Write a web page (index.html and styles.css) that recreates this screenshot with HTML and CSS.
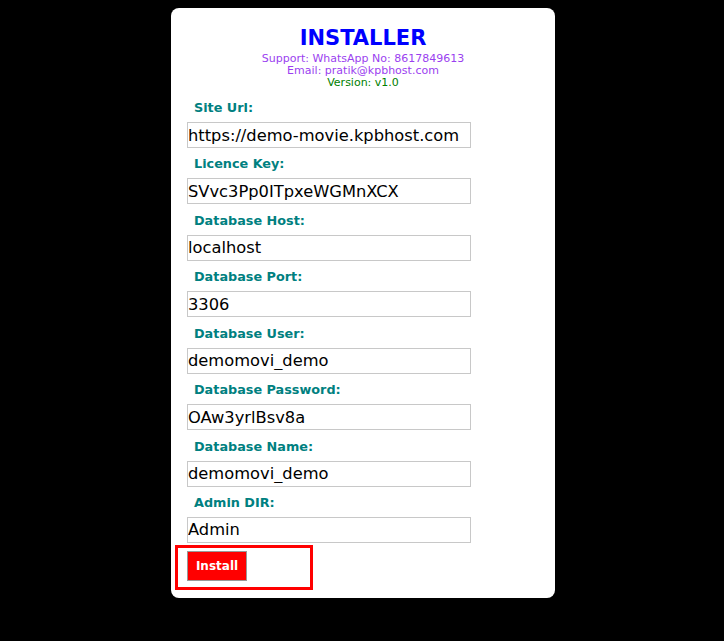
FILE: index.html
```html
<!DOCTYPE html>
<html>
<head>
<meta charset="utf-8">
<link rel="stylesheet" href="styles.css">
</head>
<body>
<div class="card">
  <div class="head">
    <h1 class="title">INSTALLER</h1>
    <div class="support">Support: WhatsApp No: 8617849613</div>
    <div class="support">Email: pratik@kpbhost.com</div>
    <div class="version">Version: v1.0</div>
  </div>
  <form class="form">
    <label class="label">Site Url:</label>
    <input class="field" type="text" value="https://demo-movie.kpbhost.com">
    <label class="label">Licence Key:</label>
    <input class="field" type="text" value="SVvc3Pp0ITpxeWGMnXCX">
    <label class="label">Database Host:</label>
    <input class="field" type="text" value="localhost">
    <label class="label">Database Port:</label>
    <input class="field" type="text" value="3306">
    <label class="label">Database User:</label>
    <input class="field" type="text" value="demomovi_demo">
    <label class="label">Database Password:</label>
    <input class="field" type="text" value="OAw3yrlBsv8a">
    <label class="label">Database Name:</label>
    <input class="field" type="text" value="demomovi_demo">
    <label class="label">Admin DIR:</label>
    <input class="field" type="text" value="Admin">
    <div class="highlight">
      <button class="btn" type="button">Install</button>
    </div>
  </form>
</div>
</body>
</html>
```
FILE: styles.css
```css
html, body {
  margin: 0;
  padding: 0;
  background: #000;
}
body {
  padding-top: 8px;
  font-family: "DejaVu Sans", Verdana, sans-serif;
}
.card {
  width: 384px;
  height: 590px;
  margin-left: 171px;
  background: #fff;
  border-radius: 8px;
  box-sizing: border-box;
  padding: 18px 16px 0 16px;
}
.head {
  text-align: center;
}
.title {
  margin: 0 0 3px 0;
  font-size: 21px;
  line-height: 24px;
  font-weight: bold;
  color: #0000ff;
}
.support {
  font-size: 11px;
  line-height: 12px;
  color: #9b3ff0;
}
.version {
  font-size: 11px;
  line-height: 12px;
  color: #008000;
}
.form {
  display: flex;
  flex-direction: column;
  align-items: flex-start;
  margin-top: 11px;
}
.label {
  display: block;
  margin-left: 7px;
  font-size: 12.8px;
  line-height: 16px;
  font-weight: bold;
  color: #008080;
  margin-bottom: 6px;
}
.field {
  display: block;
  box-sizing: border-box;
  width: 284px;
  height: 26px;
  margin: 0 0 8.43px 0;
  padding: 0;
  border: 1px solid #c8c8c8;
  font-family: "DejaVu Sans", Verdana, sans-serif;
  font-size: 16.3px;
  color: #000;
  outline: none;
}
.highlight {
  box-sizing: border-box;
  width: 138px;
  height: 45px;
  margin-left: -12px;
  margin-top: -6.43px;
  border: 3px solid #ff0000;
  padding: 3px 0 0 9px;
}
.btn {
  box-sizing: border-box;
  width: 60px;
  height: 30px;
  background: #ff0000;
  color: #fff;
  border: 1px solid #999;
  font-family: "DejaVu Sans", Verdana, sans-serif;
  font-size: 12px;
  font-weight: bold;
  padding: 0;
}
```
